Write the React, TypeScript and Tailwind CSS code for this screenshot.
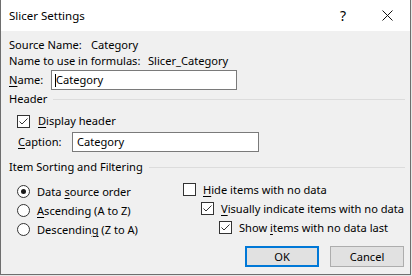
import React from 'react';

const font = { fontFamily: '"Noto Sans", "Open Sans", sans-serif' };

const Check = ({ checked }: { checked: boolean }) => (
  <span className="w-[13px] h-[13px] shrink-0 border border-[#333333] bg-white flex items-center justify-center">
    {checked && (
      <svg width="11" height="11" viewBox="0 0 11 11">
        <path d="M1.5 5.5 L4 8 L9.5 2.5" fill="none" stroke="#333333" strokeWidth="1" />
      </svg>
    )}
  </span>
);

const Radio = ({ checked }: { checked: boolean }) => (
  <span className="w-[13px] h-[13px] shrink-0 rounded-full border border-[#333333] bg-white flex items-center justify-center">
    {checked && <span className="w-[5px] h-[5px] rounded-full bg-[#1a1a1a]" />}
  </span>
);

const U = ({ children }: { children: React.ReactNode }) => <span className="underline underline-offset-2">{children}</span>;

const GroupTitle = ({ label }: { label: string }) => (
  <div className="flex items-center h-[16px] gap-[6px] pr-[5px]">
    <span>{label}</span>
    <div className="flex-1 h-px bg-[#dcdcdc]" />
  </div>
);

export default function App() {
  return (
    <div className="w-[412px] h-[276px] bg-[#e6e6e6] text-[11.1px] text-black leading-none whitespace-nowrap" style={font}>
      <div className="w-[411px] h-[275px] bg-[#f0f0f0] border-l border-r border-b border-[#6e6e6e] flex flex-col">
        {/* title bar */}
        <div className="h-[31px] bg-white flex items-center pl-[8px] shrink-0">
          <span className="text-[11.5px] text-black">Slicer Settings</span>
          <span className="ml-auto text-[14px] mr-[36px]">?</span>
          <svg width="11" height="11" viewBox="0 0 11 11" className="mr-[17px]">
            <path d="M0.5 0.5 L10.5 10.5 M10.5 0.5 L0.5 10.5" stroke="#111" strokeWidth="1" />
          </svg>
        </div>

        <div className="pl-[8px] flex flex-col">
          <div className="mt-[6px] h-[16px] flex items-center">
            <span className="w-[82px]">Source Name:</span>
            <span>Category</span>
          </div>
          <div className="h-[16px] flex items-center">
            <span className="w-[139px]">Name to use in formulas:</span>
            <span>Slicer_Category</span>
          </div>
          <div className="mt-[1px] h-[20px] flex items-center">
            <span className="w-[42px]"><U>N</U>ame:</span>
            <div className="w-[186px] h-[20px] border border-[#7a7a7a] bg-white flex items-center pl-[3px]">
              <span className="w-px h-[13px] bg-black" />
              <span>Category</span>
            </div>
          </div>

          <div className="mt-[1px]">
            <GroupTitle label="Header" />
          </div>
          <div className="mt-[6px] h-[16px] flex items-center pl-[8px] gap-[8px]">
            <Check checked />
            <span><U>D</U>isplay header</span>
          </div>
          <div className="mt-[3px] h-[20px] flex items-center pl-[9px]">
            <span className="w-[54px]"><U>C</U>aption:</span>
            <div className="w-[187px] h-[20px] border border-[#7a7a7a] bg-white flex items-center pl-[4px]">
              <span>Category</span>
            </div>
          </div>

          <div className="mt-[7px]">
            <GroupTitle label="Item Sorting and Filtering" />
          </div>

          <div className="mt-[5px] flex">
            <div className="w-[174px] pl-[8px] pt-[2px] flex flex-col">
              <div className="h-[19px] flex items-center gap-[7px]">
                <Radio checked />
                <span>Data <U>s</U>ource order</span>
              </div>
              <div className="h-[19px] flex items-center gap-[7px]">
                <Radio checked={false} />
                <span><U>A</U>scending (A to Z)</span>
              </div>
              <div className="h-[19px] flex items-center gap-[7px]">
                <Radio checked={false} />
                <span>Descendin<U>g</U> (Z to A)</span>
              </div>
            </div>
            <div className="flex flex-col">
              <div className="h-[19px] flex items-center gap-[7px]">
                <Check checked={false} />
                <span><U>H</U>ide items with no data</span>
              </div>
              <div className="h-[19px] flex items-center gap-[7px] pl-[18px]">
                <Check checked />
                <span><U>V</U>isually indicate items with no data</span>
              </div>
              <div className="h-[19px] flex items-center gap-[7px] pl-[36px]">
                <Check checked />
                <span>Show <U>i</U>tems with no data last</span>
              </div>
            </div>
          </div>

          <div className="mt-[7px] flex justify-end gap-[11px] pr-[6px]">
            <button className="w-[74px] h-[21px] border-2 border-[#0078d7] bg-[#e1e1e1] flex items-center justify-center">OK</button>
            <button className="w-[74px] h-[21px] border border-[#adadad] bg-[#e1e1e1] flex items-center justify-center">Cancel</button>
          </div>
        </div>
      </div>
    </div>
  );
}
